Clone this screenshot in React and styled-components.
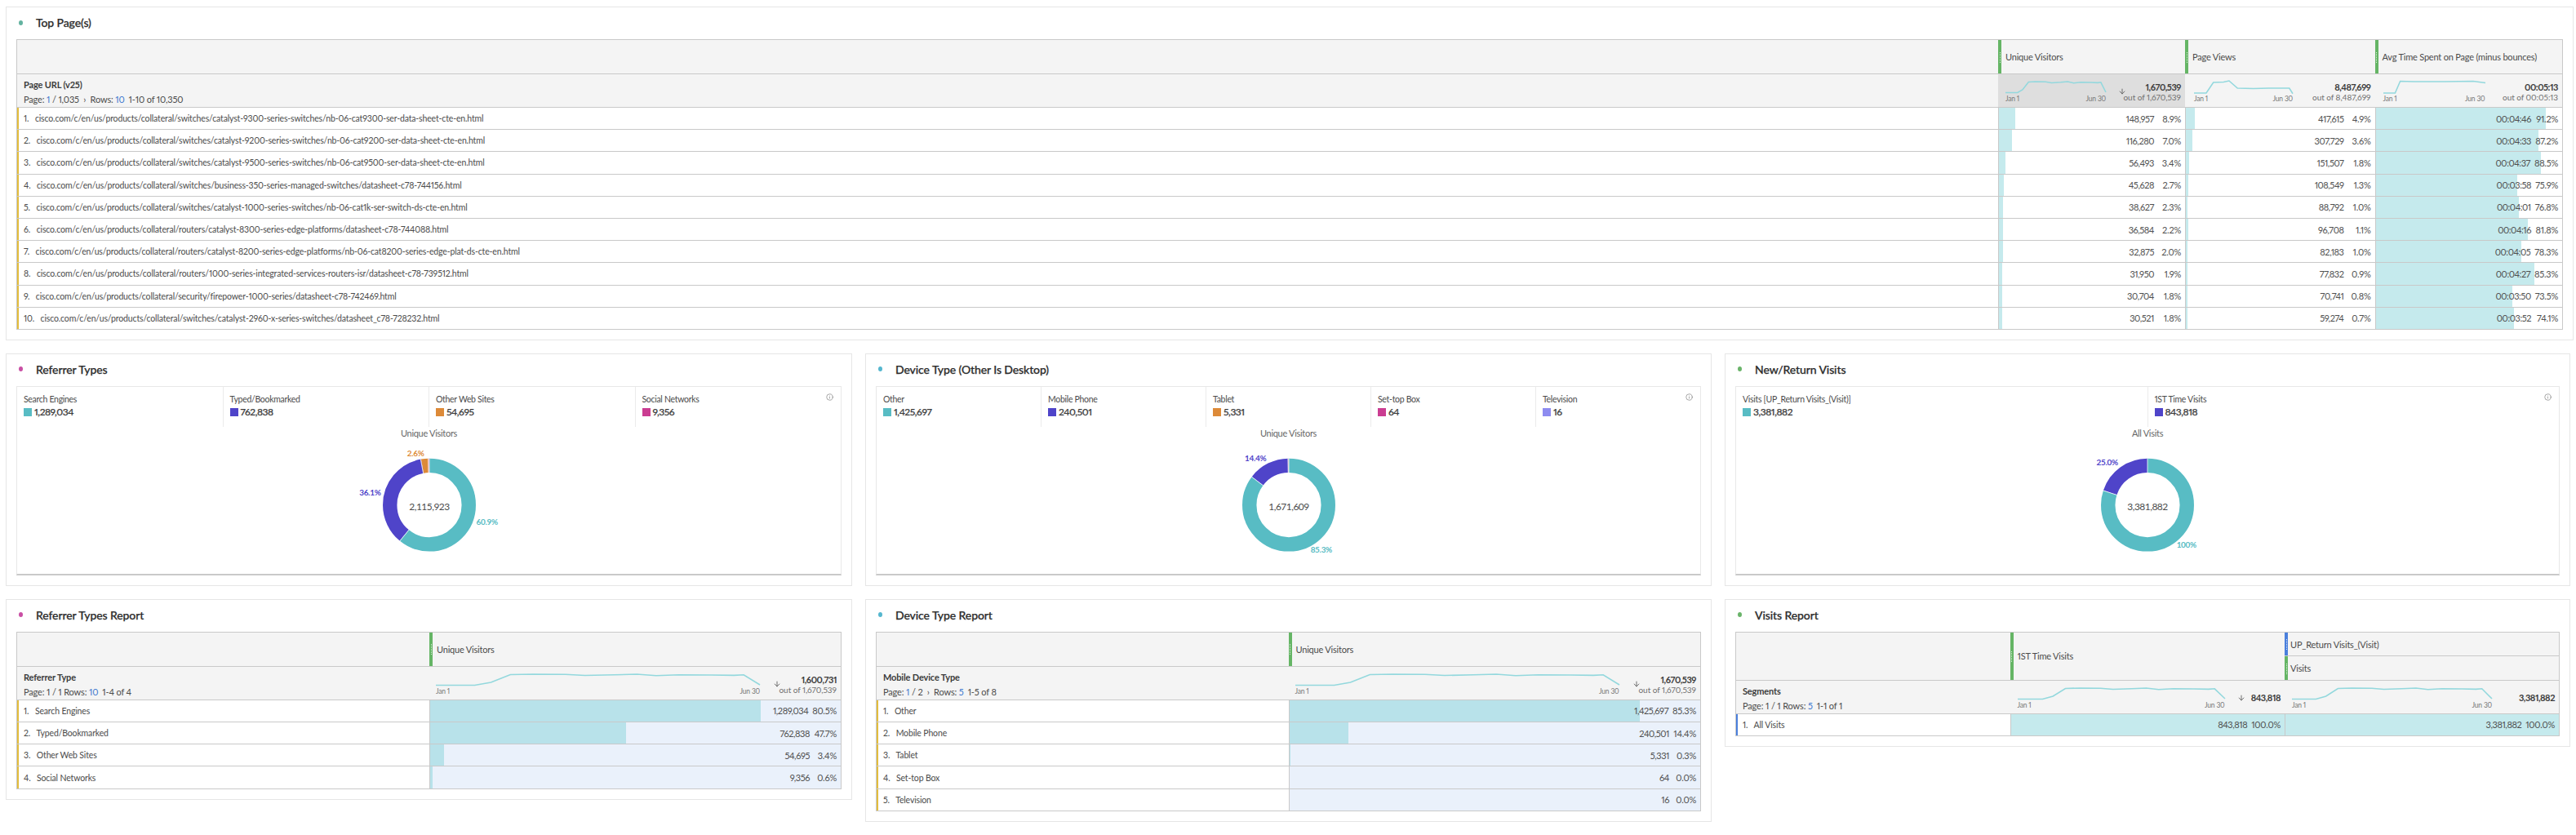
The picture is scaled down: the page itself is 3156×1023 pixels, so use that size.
import React from "react";
import styled, { createGlobalStyle } from "styled-components";
import { ArrowDown, Info } from "lucide-react";

const Global = createGlobalStyle`
  html, body { margin: 0; padding: 0; background: #fff; }
  body { font-family: "Lato", "Open Sans", sans-serif; color: #4b4b4b; font-size: 11px; font-variant-numeric: proportional-nums; }
  * { box-sizing: border-box; }
`;

const LINE = "#c9c9c9";
const Page = styled.div`
  width: 3156px; height: 1023px; padding: 8px 0 0 7px; overflow: hidden;
  display: flex; flex-direction: column; gap: 16px;
`;
const PanelRow = styled.div`
  display: grid; grid-template-columns: 1037px 1037px 1036px; gap: 16px; align-items: start;
`;
const Panel = styled.section`
  border: 1px solid #e6e6e6; background: #fff; padding: 0 12px 12px;
  ${p => p.$wide && "width: 3146px;"}
`;
const TitleBar = styled.div`
  height: 39px; display: flex; align-items: center; padding: 0 0 2px 3px;
`;
const TitleDot = styled.span`
  width: 5px; height: 6px; border-radius: 50%; background: ${p => p.$c}; margin-right: 16px;
`;
const Title = styled.h2`
  margin: 0; font-size: 14px; font-weight: 500; color: #2c2c2c; letter-spacing: -0.1px; -webkit-text-stroke: 0.25px #2c2c2c;
`;

const Table = styled.div`
  border: 1px solid ${LINE}; border-bottom: none;
`;
const Row = styled.div`
  display: grid; grid-template-columns: ${p => p.$cols};
  height: ${p => p.$h}px; border-bottom: 1px solid ${LINE};
  background: ${p => p.$bg || "#fff"};
`;
const HeadCell = styled.div`
  position: relative; display: flex; align-items: center; padding-left: ${p => p.$stacked ? 7 : 9}px;
  font-size: 11px; color: #4b4b4b; letter-spacing: -0.2px; height: 100%;
  &::before {
    content: ""; position: absolute; left: 0; top: 0; bottom: 0; width: 4px; background: ${p => p.$c || "#65b565"};
  }
  &::after {
    content: ""; position: absolute; left: 1.5px; top: 50%; height: 13px; margin-top: -6px;
    border-left: 1px dotted rgba(255,255,255,.8);
  }
`;
const HeadStack = styled.div`
  display: flex; flex-direction: column;
  & > div:first-child { height: 29.5px; border-bottom: 1px solid ${LINE}; }
  & > div:last-child { flex: 1; }
`;
const SubLeft = styled.div`
  padding: 5px 0 0 8px; display: flex; flex-direction: column; justify-content: flex-start; gap: 4px;
`;
const DimName = styled.div`
  font-weight: 700; font-size: 11px; line-height: 15px; color: #3c3c3c; letter-spacing: -0.15px;
`;
const Pager = styled.div`
  font-size: 11px; line-height: 14px; color: #4b4b4b; letter-spacing: -0.15px; white-space: nowrap; display: flex; gap: 5px;
`;
const Blue = styled.span` color: #3f78cf; `;
const SubMetric = styled.div`
  display: flex; align-items: flex-start; padding: 0 5px 0 ${p => p.$pl || 9}px; min-width: 0;
  background: ${p => p.$sorted ? "#dedede" : "transparent"};
`;
const SparkWrap = styled.div`
  flex: none; width: ${p => p.$w}px; padding-top: 8px;
`;
const SparkSvg = styled.svg`
  display: block; width: 100%; height: 16px; overflow: visible;
`;
const SparkAxis = styled.div`
  display: flex; justify-content: space-between; font-size: 8.5px; line-height: 11px; color: #777; letter-spacing: -0.2px; margin-top: 1px;
`;
const ArrowBox = styled.div`
  flex: none; width: 10px; margin: 16px 0 0 ${p => p.$ml || 15}px; color: #555; display: flex;
`;
const Totals = styled.div`
  flex: 1; min-width: 0; display: flex; flex-direction: column; align-items: flex-end;
  padding-top: ${p => p.$single ? 14 : 9}px; white-space: nowrap;
`;
const TotalValue = styled.div`
  font-weight: 700; font-size: 11px; line-height: 14px; color: #3c3c3c; letter-spacing: -0.45px;
`;
const TotalOut = styled.div`
  font-size: 10px; line-height: 12px; color: #707070; letter-spacing: -0.05px; margin-top: -1px;
`;
const DimCell = styled.div`
  display: flex; align-items: center; gap: 5px; padding-left: 6px; white-space: nowrap;
  border-left: 2px solid ${p => p.$c || "#e3bd3c"}; font-size: 10.5px; color: #4b4b4b; letter-spacing: -0.15px;
  background: #fff;
`;
const ValueCell = styled.div`
  position: relative; display: flex; align-items: center; justify-content: flex-end; padding-right: 5px; gap: 5px;
  border-left: 1px solid ${LINE}; background: ${p => p.$bg || "#fff"};
  font-size: 11px; color: #505050; letter-spacing: -0.45px;
`;
const Bar = styled.div`
  position: absolute; left: 0; top: 0; bottom: 0; background: ${p => p.$c || "#c5eaed"};
`;
const CellText = styled.span` position: relative; white-space: nowrap; `;
const Pct = styled(CellText)` min-width: 28px; text-align: right; letter-spacing: -0.25px; `;

const ChartBox = styled.div`
  position: relative; height: 232px; border: 1px solid #e8e8e8; border-bottom: 2px solid ${LINE};
  display: flex; flex-direction: column;
`;
const Legend = styled.div` display: flex; height: 49px; `;
const LegendCell = styled.div`
  flex: 1; padding: 8px 0 0 8px; & + & { border-left: 1px solid #ebebeb; }
`;
const LegendLabel = styled.div` font-size: 10.5px; line-height: 14px; color: #4b4b4b; letter-spacing: -0.3px; `;
const LegendValue = styled.div`
  display: flex; align-items: center; gap: 3px; font-size: 12px; line-height: 14px; margin-top: 2px;
  font-weight: 500; color: #3c3c3c; letter-spacing: -0.45px; -webkit-text-stroke: 0.2px #3c3c3c;
`;
const Swatch = styled.span` width: 10px; height: 10px; background: ${p => p.$c}; flex: none; `;
const InfoMark = styled.span`
  position: absolute; top: 8px; right: 9px; color: #6f6f6f; display: flex;
`;
const ChartTitle = styled.div`
  text-align: center; font-size: 11px; line-height: 16px; color: #666; letter-spacing: -0.3px;
`;
const DonutSvg = styled.svg` display: block; margin: 0 auto; width: 240px; height: 165px; `;
const CenterText = styled.text` font: 12px "Lato", sans-serif; fill: #4b4b4b; letter-spacing: -0.5px; `;
const SliceText = styled.text` font: 700 10px "Lato", sans-serif; letter-spacing: -0.3px; `;

const TEAL = "#58bcc4", PURPLE = "#4f44c9", ORANGE = "#dd8a38", PINK = "#cb3d92", LILAC = "#8e8cf0";

const SHAPES = {
  a: "0,14.5 12,14.5 17,11 23,1.5 30,1 40,1.2 46,2.5 55,1.8 62,1 68,2.8 75,1.8 85,2 92,2.4 95,1.8 100,14",
  b: "0,15 12.4,15 19.6,2 30,1.5 35.5,0 44,9 60,9.5 76,9 96.5,9 100,15.7",
  c: "0,15 11.5,15 16.5,0.5 30,1 60,1 88,0.5 100,2.5",
};
const Spark = ({ w, shape = "a" }) => (
  <SparkWrap $w={w}>
    <SparkSvg viewBox="0 0 100 16" preserveAspectRatio="none">
      <polyline points={SHAPES[shape]} fill="none" stroke="#93d8dd" strokeWidth="1.6" vectorEffect="non-scaling-stroke" />
    </SparkSvg>
    <SparkAxis><span>Jan 1</span><span>Jun 30</span></SparkAxis>
  </SparkWrap>
);

const Metric = ({ w, shape, total, out, arrow, ml, pl, grey }) => (
  <SubMetric $sorted={grey} $pl={pl}>
    <Spark w={w} shape={shape} />
    {arrow && <ArrowBox $ml={ml}><ArrowDown size={10} strokeWidth={2} /></ArrowBox>}
    <Totals $single={!out}>
      <TotalValue>{total}</TotalValue>
      {out && <TotalOut>out of {out}</TotalOut>}
    </Totals>
  </SubMetric>
);

const Donut = ({ segs, total, labels }) => {
  const r = 48.5, C = 2 * Math.PI * r;
  let acc = 0;
  return (
    <DonutSvg viewBox="-120 -80 240 165">
      <g transform="rotate(-90)">
        {segs.map(([p, c], i) => {
          const el = (
            <circle key={i} r={r} fill="none" stroke={c} strokeWidth="17.5"
              strokeDasharray={`${(p / 100) * C} ${C}`} strokeDashoffset={-(acc / 100) * C} />
          );
          acc += p;
          return el;
        })}
        {(() => {
          let a = 0;
          return segs.map(([p], i) => {
            const ang = (a / 100) * 2 * Math.PI; a += p;
            return <line key={i} x1={39.5 * Math.cos(ang)} y1={39.5 * Math.sin(ang)} x2={57.5 * Math.cos(ang)} y2={57.5 * Math.sin(ang)} stroke="#fff" strokeWidth="0.8" />;
          });
        })()}
      </g>
      <CenterText x="0" y="3" textAnchor="middle" dominantBaseline="middle">{total}</CenterText>
      {labels.map(([t, x, y, c]) => (
        <SliceText key={t} x={x} y={y} fill={c} textAnchor="middle" dominantBaseline="middle">{t}</SliceText>
      ))}
    </DonutSvg>
  );
};

const ChartPanel = ({ dot, title, legend, chartTitle, segs, total, labels }) => (
  <Panel>
    <TitleBar><TitleDot $c={dot} /><Title>{title}</Title></TitleBar>
    <ChartBox>
      <Legend>
        {legend.map(([l, v, c]) => (
          <LegendCell key={l}>
            <LegendLabel>{l}</LegendLabel>
            <LegendValue><Swatch $c={c} />{v}</LegendValue>
          </LegendCell>
        ))}
      </Legend>
      <InfoMark><Info size={9} strokeWidth={1.6} /></InfoMark>
      <ChartTitle>{chartTitle}</ChartTitle>
      <Donut segs={segs} total={total} labels={labels} />
    </ChartBox>
  </Panel>
);

const TOP_COLS = "2427px 229px 232.5px 1fr";
const URLS = [
  ["cisco.com/c/en/us/products/collateral/switches/catalyst-9300-series-switches/nb-06-cat9300-ser-data-sheet-cte-en.html", ["148,957", "8.9%"], ["417,615", "4.9%"], ["00:04:46", "91.2%"]],
  ["cisco.com/c/en/us/products/collateral/switches/catalyst-9200-series-switches/nb-06-cat9200-ser-data-sheet-cte-en.html", ["116,280", "7.0%"], ["307,729", "3.6%"], ["00:04:33", "87.2%"]],
  ["cisco.com/c/en/us/products/collateral/switches/catalyst-9500-series-switches/nb-06-cat9500-ser-data-sheet-cte-en.html", ["56,493", "3.4%"], ["151,507", "1.8%"], ["00:04:37", "88.5%"]],
  ["cisco.com/c/en/us/products/collateral/switches/business-350-series-managed-switches/datasheet-c78-744156.html", ["45,628", "2.7%"], ["108,549", "1.3%"], ["00:03:58", "75.9%"]],
  ["cisco.com/c/en/us/products/collateral/switches/catalyst-1000-series-switches/nb-06-cat1k-ser-switch-ds-cte-en.html", ["38,627", "2.3%"], ["88,792", "1.0%"], ["00:04:01", "76.8%"]],
  ["cisco.com/c/en/us/products/collateral/routers/catalyst-8300-series-edge-platforms/datasheet-c78-744088.html", ["36,584", "2.2%"], ["96,708", "1.1%"], ["00:04:16", "81.8%"]],
  ["cisco.com/c/en/us/products/collateral/routers/catalyst-8200-series-edge-platforms/nb-06-cat8200-series-edge-plat-ds-cte-en.html", ["32,875", "2.0%"], ["82,183", "1.0%"], ["00:04:05", "78.3%"]],
  ["cisco.com/c/en/us/products/collateral/routers/1000-series-integrated-services-routers-isr/datasheet-c78-739512.html", ["31,950", "1.9%"], ["77,832", "0.9%"], ["00:04:27", "85.3%"]],
  ["cisco.com/c/en/us/products/collateral/security/firepower-1000-series/datasheet-c78-742469.html", ["30,704", "1.8%"], ["70,741", "0.8%"], ["00:03:50", "73.5%"]],
  ["cisco.com/c/en/us/products/collateral/switches/catalyst-2960-x-series-switches/datasheet_c78-728232.html", ["30,521", "1.8%"], ["59,274", "0.7%"], ["00:03:52", "74.1%"]],
];

const Value = ({ v, pct, bg, barColor }) => (
  <ValueCell $bg={bg}>
    <Bar $c={barColor} style={{ width: pct }} />
    <CellText>{v}</CellText>
    <Pct>{pct}</Pct>
  </ValueCell>
);

const ReportPanel = ({ dot, title, dim, pager, cols, total, out, rows }) => (
  <Panel>
    <TitleBar><TitleDot $c={dot} /><Title>{title}</Title></TitleBar>
    <Table>
      <Row $cols={cols} $h={42} $bg="#f4f4f4"><div /><HeadCell>Unique Visitors</HeadCell></Row>
      <Row $cols={cols} $h={41} $bg="#f4f4f4">
        <SubLeft><DimName>{dim}</DimName><Pager>{pager}</Pager></SubLeft>
        <Metric w={397} total={total} out={out} arrow ml={16} pl={8} />
      </Row>
      {rows.map(([n, v, p], i) => (
        <Row key={n} $cols={cols} $h={27.2}>
          <DimCell>{i + 1}.<span>&nbsp;{n}</span></DimCell>
          <Value v={v} pct={p} bg="#eaf1fb" barColor="#b8e2ea" />
        </Row>
      ))}
    </Table>
  </Panel>
);

const VISIT_COLS = "335.5px 336.5px 1fr";

export default function App() {
  return (
    <Page>
      <Global />
      <Panel $wide>
        <TitleBar><TitleDot $c="#63b3a0" /><Title>Top Page(s)</Title></TitleBar>
        <Table>
          <Row $cols={TOP_COLS} $h={42} $bg="#f4f4f4">
            <div />
            <HeadCell>Unique Visitors</HeadCell>
            <HeadCell>Page Views</HeadCell>
            <HeadCell>Avg Time Spent on Page (minus bounces)</HeadCell>
          </Row>
          <Row $cols={TOP_COLS} $h={41} $bg="#f4f4f4">
            <SubLeft>
              <DimName>Page URL (v25)</DimName>
              <Pager><span>Page: <Blue>1</Blue> / 1,035 &nbsp;›&nbsp; Rows: <Blue>10</Blue></span><span>1-10 of 10,350</span></Pager>
            </SubLeft>
            <Metric w={123} total="1,670,539" out="1,670,539" arrow grey />
            <Metric w={121} shape="b" total="8,487,699" out="8,487,699" pl={11} />
            <Metric w={125} shape="c" total="00:05:13" out="00:05:13" pl={10} />
          </Row>
          {URLS.map(([u, a, b, c], i) => (
            <Row key={u} $cols={TOP_COLS} $h={27.2}>
              <DimCell>{i + 1}.<span>&nbsp;{u}</span></DimCell>
              <Value v={a[0]} pct={a[1]} />
              <Value v={b[0]} pct={b[1]} />
              <Value v={c[0]} pct={c[1]} />
            </Row>
          ))}
        </Table>
      </Panel>

      <PanelRow>
        <ChartPanel dot="#c94fa4" title="Referrer Types" chartTitle="Unique Visitors" total="2,115,923"
          legend={[["Search Engines", "1,289,034", TEAL], ["Typed/Bookmarked", "762,838", PURPLE], ["Other Web Sites", "54,695", ORANGE], ["Social Networks", "9,356", PINK]]}
          segs={[[60.9, TEAL], [36.1, PURPLE], [2.6, ORANGE], [0.4, PINK]]}
          labels={[["60.9%", 71, 22, TEAL], ["36.1%", -73, -14, PURPLE], ["2.6%", -17, -62, ORANGE]]} />
        <ChartPanel dot="#55b7cf" title="Device Type (Other Is Desktop)" chartTitle="Unique Visitors" total="1,671,609"
          legend={[["Other", "1,425,697", TEAL], ["Mobile Phone", "240,501", PURPLE], ["Tablet", "5,331", ORANGE], ["Set-top Box", "64", PINK], ["Television", "16", LILAC]]}
          segs={[[85.3, TEAL], [14.4, PURPLE], [0.3, ORANGE]]}
          labels={[["14.4%", -41, -56, PURPLE], ["85.3%", 40, 56, TEAL]]} />
        <ChartPanel dot="#6ab46a" title="New/Return Visits" chartTitle="All Visits" total="3,381,882"
          legend={[["Visits [UP_Return Visits_(Visit)]", "3,381,882", TEAL], ["1ST Time Visits", "843,818", PURPLE]]}
          segs={[[80, TEAL], [20, PURPLE]]}
          labels={[["25.0%", -49.5, -51, PURPLE], ["100%", 48, 50, TEAL]]} />
      </PanelRow>

      <PanelRow>
        <ReportPanel dot="#c94fa4" title="Referrer Types Report" dim="Referrer Type" cols="505px 1fr"
          pager={<><span>Page: 1 / 1 Rows: <Blue>10</Blue></span><span>1-4 of 4</span></>}
          total="1,600,731" out="1,670,539"
          rows={[["Search Engines", "1,289,034", "80.5%"], ["Typed/Bookmarked", "762,838", "47.7%"], ["Other Web Sites", "54,695", "3.4%"], ["Social Networks", "9,356", "0.6%"]]} />
        <ReportPanel dot="#55b7cf" title="Device Type Report" dim="Mobile Device Type" cols="504.5px 1fr"
          pager={<><span>Page: <Blue>1</Blue> / 2 &nbsp;›&nbsp; Rows: <Blue>5</Blue></span><span>1-5 of 8</span></>}
          total="1,670,539" out="1,670,539"
          rows={[["Other", "1,425,697", "85.3%"], ["Mobile Phone", "240,501", "14.4%"], ["Tablet", "5,331", "0.3%"], ["Set-top Box", "64", "0.0%"], ["Television", "16", "0.0%"]]} />
        <Panel>
          <TitleBar><TitleDot $c="#6ab46a" /><Title>Visits Report</Title></TitleBar>
          <Table>
            <Row $cols={VISIT_COLS} $h={59} $bg="#f4f4f4">
              <div />
              <HeadCell>1ST Time Visits</HeadCell>
              <HeadStack>
                <HeadCell $c="#4a7fdc" $stacked>UP_Return Visits_(Visit)</HeadCell>
                <HeadCell $stacked>Visits</HeadCell>
              </HeadStack>
            </Row>
            <Row $cols={VISIT_COLS} $h={41} $bg="#f4f4f4">
              <SubLeft><DimName>Segments</DimName><Pager><span>Page: 1 / 1 Rows: <Blue>5</Blue></span><span>1-1 of 1</span></Pager></SubLeft>
              <Metric w={254} total="843,818" arrow />
              <Metric w={245} total="3,381,882" />
            </Row>
            <Row $cols={VISIT_COLS} $h={27.2}>
              <DimCell $c="#4a7fdc">1.<span>&nbsp;All Visits</span></DimCell>
              <Value v="843,818" pct="100.0%" />
              <Value v="3,381,882" pct="100.0%" />
            </Row>
          </Table>
        </Panel>
      </PanelRow>
    </Page>
  );
}
